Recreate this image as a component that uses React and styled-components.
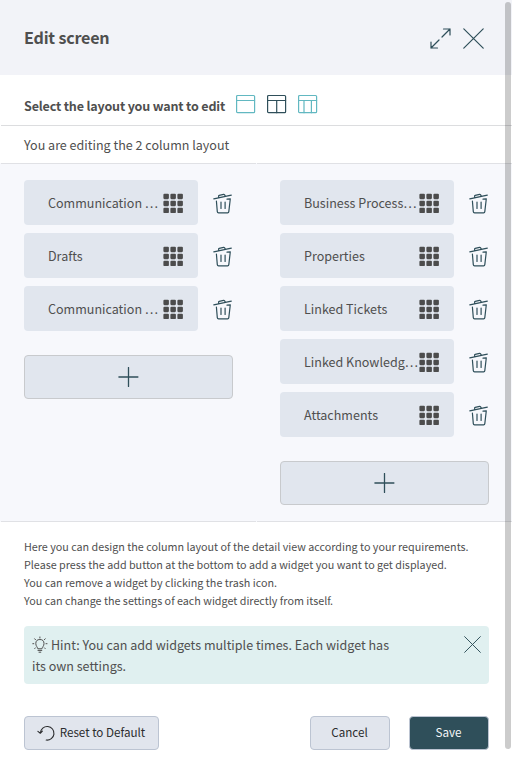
import React from "react";
import styled, { createGlobalStyle } from "styled-components";

const GlobalStyle = createGlobalStyle`
  * { box-sizing: border-box; }
  html, body { margin: 0; background: #fff; overflow: hidden; }
  body {
    font-family: "Noto Sans CJK KR", "Noto Sans", sans-serif;
    font-size: 12.54px;
    line-height: 21px;
    color: #4f4f4f;
  }
  button { font: inherit; color: inherit; margin: 0; padding: 0; cursor: pointer; }
  svg { display: block; flex: none; }
`;

const Dialog = styled.div`
  position: relative;
  width: 512px;
  height: 763px;
  background: #fff;
  overflow: hidden;
`;

const Header = styled.header`
  display: flex;
  align-items: center;
  justify-content: space-between;
  height: 75px;
  padding: 1px 28px 0 24px;
  background: #f2f3f8;
`;

const Title = styled.h1`
  margin: 0;
  padding-bottom: 2px;
  font-size: 16.1px;
  font-weight: 700;
  line-height: 24px;
  letter-spacing: -0.2px;
`;

const HeaderActions = styled.div`
  display: flex;
  align-items: center;
  gap: 12px;
`;

const IconButton = styled.button`
  display: flex;
  border: 0;
  background: none;
  color: #2f4f5a;
`;

const LayoutPicker = styled.div`
  display: flex;
  height: 51px;
  margin-left: 1px;
  padding: 19px 0 0 23px;
  border-bottom: 1px solid #dcdddf;
`;

const PickerLabel = styled.span`
  width: 212px;
  padding-top: 1px;
  font-weight: 700;
  letter-spacing: -0.17px;
  white-space: nowrap;
`;

const LayoutOption = styled.button`
  display: flex;
  width: 31px;
  height: 22px;
  border: 0;
  background: none;
  color: ${(p) => (p.$active ? "#2f4f5a" : "#62b8c1")};
`;

const CurrentLayout = styled.p`
  height: 37px;
  margin: 0;
  padding: 8px 24px 0;
`;

const Columns = styled.div`
  display: grid;
  grid-template-columns: 256px 256px;
  height: 359px;
  background: #f7f8fc;
`;

const Column = styled.section`
  display: flex;
  flex-direction: column;
  gap: 8px;
  margin-left: 1px;
  padding: 16px 23px 0 23px;
  border-top: 1px solid #e0e1e5;
  border-bottom: 1px solid #e0e1e5;
`;

const WidgetRow = styled.div`
  display: flex;
  align-items: center;
  gap: 15px;
`;

const WidgetCard = styled.div`
  display: flex;
  align-items: center;
  width: 174px;
  height: 45px;
  padding: 0 14px 0 24px;
  border-radius: 4px;
  background: #e1e6ee;
`;

const WidgetName = styled.span`
  width: 115px;
  white-space: nowrap;
  line-height: 21px;
`;

const AddButton = styled.button`
  display: flex;
  align-items: center;
  justify-content: center;
  width: 209px;
  height: 44px;
  margin-top: 16px;
  border: 1px solid #c8cacd;
  border-radius: 4px;
  background: #e1e6ee;
  color: #2f4f5a;
`;

const HelpText = styled.div`
  height: 104px;
  padding: 16px 24px 0;
  font-size: 10.75px;
  line-height: 18px;
  white-space: nowrap;
`;

const HelpLine = styled.p`
  margin: 0;
`;

const Hint = styled.aside`
  display: flex;
  justify-content: space-between;
  align-items: flex-start;
  width: 465px;
  height: 58px;
  margin-left: 24px;
  padding: 8px;
  border-radius: 4px;
  background: #e0f0f0;
`;

const HintText = styled.div`
  white-space: nowrap;
`;

const HintFirstLine = styled.div`
  display: flex;
  align-items: center;
  gap: 3px;
`;

const DismissButton = styled(IconButton)`
  margin-top: 2px;
`;

const Footer = styled.footer`
  display: flex;
  gap: 19px;
  padding: 32px 23px 0 24px;
`;

const ActionButton = styled.button`
  display: flex;
  align-items: center;
  justify-content: center;
  gap: 5px;
  width: ${(p) => (p.$wide ? 135 : 80)}px;
  height: 34px;
  margin-right: ${(p) => (p.$wide ? "auto" : 0)};
  padding: 0 1px 3px 0;
  border: 1px solid #bcc4d2;
  border-radius: 4px;
  background: ${(p) => (p.$primary ? "#2f4f5a" : "#e1e5ed")};
  color: ${(p) => (p.$primary ? "#f4f6f8" : "#2b2c2e")};
  font-size: 11.64px;
  white-space: nowrap;
`;

const ScrollThumb = styled.div`
  position: absolute;
  top: 2px;
  right: 1px;
  width: 6px;
  height: 747px;
  border-radius: 3px;
  background: rgba(0, 0, 0, 0.2);
`;

const line = { fill: "none", stroke: "currentColor", strokeLinecap: "round", strokeLinejoin: "round" };

const ExpandIcon = () => (
  <svg width="21" height="21" viewBox="0 0 21 21" {...line} strokeWidth="1.2">
    <path d="M12 9 20 1M13.5 1H20V7M9 12 1 20M1 14V20H7.5" />
  </svg>
);

const CloseIcon = ({ size }) => (
  <svg width={size} height={size} viewBox="0 0 21 21" {...line} strokeWidth="1.2">
    <path d="M.8.8 20.2 20.2M20.2.8.8 20.2" />
  </svg>
);

const LayoutIcon = ({ columns }) => (
  <svg width="20" height="20" viewBox="0 0 20 20" {...line} strokeWidth="1.2">
    <rect x=".6" y="1.5" width="18" height="17.2" rx="1" />
    <path d="M.6 6.5H18.6" />
    {columns === 2 && <path d="M9.7 6.5V18.7" />}
    {columns === 3 && <path d="M6 6.5V18.7M13.4 6.5V18.7" />}
  </svg>
);

const GridIcon = () => (
  <svg width="20" height="20" viewBox="0 0 20 20" fill="#4c4c4c">
    {[0, 7, 14].map((y) => [0, 7, 14].map((x) => (
      <rect key={`${x}-${y}`} x={x + 0.4} y={y + 0.7} width="5.5" height="5.5" rx="1.1" />
    )))}
  </svg>
);

const TrashIcon = () => (
  <svg width="20" height="22" viewBox="0 0 20 22" {...line} strokeWidth="1.2">
    <path d="M.8 6.8 18.3 3.1M5.8 5.5 5.6 4.2Q5.5 3.6 6.2 3.4L10.6 2.4Q11.2 2.3 11.6 2.8L12.3 4.1M3.4 9 4.3 19.6Q4.4 20.8 5.6 20.8H14.6Q15.7 20.8 15.8 19.6L17.3 6.8 14 7.1M8 10V16.5M12.1 10V16.5" />
  </svg>
);

const PlusIcon = () => (
  <svg width="21" height="20" viewBox="0 0 21 20" {...line} strokeWidth="1.3">
    <path d="M10.5.5V19.5M.9 10H19.9" />
  </svg>
);

const BulbIcon = () => (
  <svg width="16" height="18" viewBox="0 0 16 18" {...line} strokeWidth="1">
    <path d="M5.8 12.4C5.6 11 3.8 10.2 3.8 7.6A4.1 4.1 0 0 1 12 7.6C12 10.2 10.2 11 10 12.4ZM6 14.4H9.8M7 16.2H8.8M7.9 1V2M2.7 2.8 3.5 3.7M13.2 2.8 12.4 3.7M.8 7.7H1.8M14 7.7H15M2.7 12.6 3.5 11.8M13.2 12.6 12.4 11.8" />
  </svg>
);

const ResetIcon = () => (
  <svg width="18" height="18" viewBox="0 0 18 18" {...line} strokeWidth="1.1">
    <path d="M3.4 9.8A6.8 6.8 0 1 1 9.2 17M.9 8.4 3.3 10.3 5.4 8.2" />
  </svg>
);

const columns = [
  ["Communication …", "Drafts", "Communication …"],
  ["Business Process…", "Properties", "Linked Tickets", "Linked Knowledg…", "Attachments"],
];

const help = [
  "Here you can design the column layout of the detail view according to your requirements.",
  "Please press the add button at the bottom to add a widget you want to get displayed.",
  "You can remove a widget by clicking the trash icon.",
  "You can change the settings of each widget directly from itself.",
];

export default function App() {
  return (
    <>
      <GlobalStyle />
      <Dialog>
        <Header>
          <Title>Edit screen</Title>
          <HeaderActions>
            <IconButton aria-label="Expand"><ExpandIcon /></IconButton>
            <IconButton aria-label="Close"><CloseIcon size={21} /></IconButton>
          </HeaderActions>
        </Header>
        <LayoutPicker>
          <PickerLabel>Select the layout you want to edit</PickerLabel>
          {[1, 2, 3].map((n) => (
            <LayoutOption key={n} $active={n === 2} aria-label={`Layout ${n}`}>
              <LayoutIcon columns={n} />
            </LayoutOption>
          ))}
        </LayoutPicker>
        <CurrentLayout>You are editing the 2 column layout</CurrentLayout>
        <Columns>
          {columns.map((names, c) => (
            <Column key={c}>
              {names.map((name, i) => (
                <WidgetRow key={i}>
                  <WidgetCard>
                    <WidgetName>{name}</WidgetName>
                    <GridIcon />
                  </WidgetCard>
                  <IconButton aria-label="Remove widget"><TrashIcon /></IconButton>
                </WidgetRow>
              ))}
              <AddButton aria-label="Add widget"><PlusIcon /></AddButton>
            </Column>
          ))}
        </Columns>
        <HelpText>
          {help.map((t) => <HelpLine key={t}>{t}</HelpLine>)}
        </HelpText>
        <Hint>
          <HintText>
            <HintFirstLine>
              <BulbIcon />
              <span>Hint: You can add widgets multiple times. Each widget has</span>
            </HintFirstLine>
            <div>its own settings.</div>
          </HintText>
          <DismissButton aria-label="Dismiss hint"><CloseIcon size={17} /></DismissButton>
        </Hint>
        <Footer>
          <ActionButton $wide><ResetIcon />Reset to Default</ActionButton>
          <ActionButton>Cancel</ActionButton>
          <ActionButton $primary>Save</ActionButton>
        </Footer>
        <ScrollThumb />
      </Dialog>
    </>
  );
}
